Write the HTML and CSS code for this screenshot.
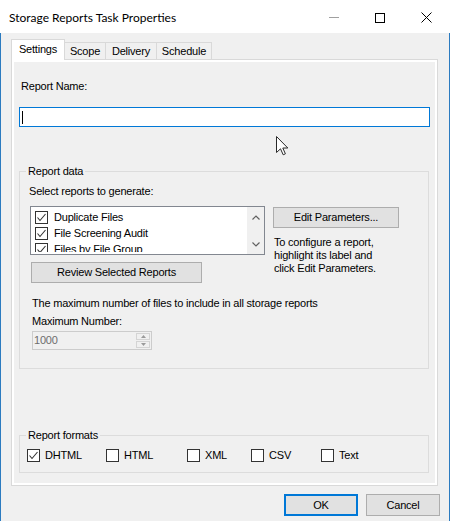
FILE: index.html
```html
<!DOCTYPE html>
<html>
<head>
<meta charset="utf-8">
<title>Storage Reports Task Properties</title>
<link rel="stylesheet" href="styles.css">
</head>
<body>
<div class="window">
  <div class="titlebar">
    <span class="title">Storage Reports Task Properties</span>
    <div class="controls">
      <span class="ctl"><svg width="10" height="1" viewBox="0 0 10 1"><rect width="10" height="1" fill="#a0a0a0"/></svg></span>
      <span class="ctl"><svg width="10" height="10" viewBox="0 0 10 10"><rect x="0.5" y="0.5" width="9" height="9" fill="none" stroke="#000"/></svg></span>
      <span class="ctl"><svg width="11" height="11" viewBox="0 0 11 11"><path d="M0.5 0.5 L10.5 10.5 M10.5 0.5 L0.5 10.5" stroke="#000" stroke-width="1" fill="none"/></svg></span>
    </div>
  </div>
  <div class="client">
    <div class="tabs">
      <div class="tab active t-settings">Settings</div>
      <div class="tab t-scope">Scope</div>
      <div class="tab t-delivery">Delivery</div>
      <div class="tab t-schedule">Schedule</div>
    </div>
    <div class="panel">
      <div class="field-label">Report Name:</div>
      <div class="textbox"><span class="caret"></span></div>

      <fieldset class="group group-data">
        <legend>Report data</legend>
        <div class="data-body">
          <div class="select-label">Select reports to generate:</div>
          <div class="data-row">
            <div class="left-col">
              <div class="listbox">
                <div class="items">
                  <div class="item"><span class="check"><svg width="11" height="11" viewBox="0 0 11 11"><path d="M1.5 5.5 L4 8.5 L9.5 2" fill="none" stroke="#333" stroke-width="1.1"/></svg></span>Duplicate Files</div>
                  <div class="item"><span class="check"><svg width="11" height="11" viewBox="0 0 11 11"><path d="M1.5 5.5 L4 8.5 L9.5 2" fill="none" stroke="#333" stroke-width="1.1"/></svg></span>File Screening Audit</div>
                  <div class="item"><span class="check"><svg width="11" height="11" viewBox="0 0 11 11"><path d="M1.5 5.5 L4 8.5 L9.5 2" fill="none" stroke="#333" stroke-width="1.1"/></svg></span>Files by File Group</div>
                </div>
                <div class="scrollbar">
                  <svg width="8" height="5" viewBox="0 0 8 5"><path d="M0.5 4.5 L4 1 L7.5 4.5" fill="none" stroke="#606060" stroke-width="1.2"/></svg>
                  <svg width="8" height="5" viewBox="0 0 8 5"><path d="M0.5 0.5 L4 4 L7.5 0.5" fill="none" stroke="#606060" stroke-width="1.2"/></svg>
                </div>
              </div>
              <button class="btn review">Review Selected Reports</button>
            </div>
            <div class="right-col">
              <button class="btn edit">Edit Parameters...</button>
              <p class="hint">To configure a report,<br>highlight its label and<br>click Edit Parameters.</p>
            </div>
          </div>
          <div class="max-text">The maximum number of files to include in all storage reports</div>
          <div class="max-label">Maximum Number:</div>
          <div class="spin">
            <span class="spin-val">1000</span>
            <span class="spin-btns">
              <span class="spin-btn"><svg width="5" height="3" viewBox="0 0 5 3"><path d="M0 3 L2.5 0 L5 3 Z" fill="#9a9a9a"/></svg></span>
              <span class="spin-btn"><svg width="5" height="3" viewBox="0 0 5 3"><path d="M0 0 L2.5 3 L5 0 Z" fill="#9a9a9a"/></svg></span>
            </span>
          </div>
        </div>
      </fieldset>

      <fieldset class="group group-formats">
        <legend>Report formats</legend>
        <div class="formats-body">
          <label class="fmt"><span class="check"><svg width="11" height="11" viewBox="0 0 11 11"><path d="M1.5 5.5 L4 8.5 L9.5 2" fill="none" stroke="#333" stroke-width="1.1"/></svg></span>DHTML</label>
          <label class="fmt"><span class="check"></span>HTML</label>
          <label class="fmt"><span class="check"></span>XML</label>
          <label class="fmt"><span class="check"></span>CSV</label>
          <label class="fmt"><span class="check"></span>Text</label>
        </div>
      </fieldset>
    </div>
    <div class="buttons">
      <button class="btn dlg ok">OK</button>
      <button class="btn dlg">Cancel</button>
    </div>
  </div>
  <svg class="cursor" width="13" height="20" viewBox="0 0 13 20"><path d="M0.5 0.5 L0.5 16.5 L4.5 12.8 L7.2 18.8 L9.4 17.8 L6.8 12 L11.8 12 Z" fill="#fff" stroke="#2a2a2a" stroke-width="1" stroke-linejoin="round"/></svg>
</div>
</body>
</html>
```
FILE: styles.css
```css
* { box-sizing: border-box; }
html, body { margin: 0; padding: 0; background: #fff; }
body {
  font-family: "Liberation Sans", Arial, sans-serif;
  font-size: 11px;
  letter-spacing: -0.2px;
  line-height: 13px;
  color: #000;
}
.window { position: relative; width: 451px; height: 521px; overflow: hidden; background: #fff; }

.titlebar { height: 33px; padding-top: 2px; display: flex; align-items: center; background: #fff; }
.title { padding-left: 9px; font-family: Lato, "Noto Sans", sans-serif; font-size: 12px; line-height: 16px; letter-spacing: 0; color: #000; }
.controls { margin-left: auto; margin-right: 2px; display: flex; height: 31px; }
.ctl { width: 46px; display: flex; align-items: center; justify-content: center; }
.ctl svg { display: block; }

.client {
  width: 450px; height: 488px; background: #f0f0f0;
  border-left: 1px solid #2b7bc0; border-right: 1px solid #2b7bc0;
  padding: 6px 9px 0 10px;
}

.tabs { display: flex; align-items: flex-end; height: 20px; position: relative; z-index: 1; }
.tab {
  height: 17px; border: 1px solid #d9d9d9; border-bottom: none; background: #f0f0f0;
  text-align: center; padding-top: 2px; margin-left: -1px; white-space: nowrap;
}
.tab.active { height: 21px; margin-bottom: -1px; margin-left: 0; background: #fff; padding-top: 3px; }
.t-settings { width: 54px; }
.t-scope { width: 42px; }
.t-delivery { width: 52px; }
.t-schedule { width: 56px; }

.panel {
  width: 427px; height: 427px; border: 1px solid #d9d9d9;
  box-shadow: inset 0 0 0 2px #fff; background: #f0f0f0;
  padding: 20px 7px 0 7px;
}
.field-label { margin-left: 2px; }
.textbox {
  margin-top: 14px; width: 411px; height: 20px; background: #fff;
  border: 1px solid #0078d7; display: flex; align-items: center;
}
.caret { width: 1px; height: 13px; background: #000; margin-left: 2px; }

.group { margin: 0; padding: 0; border: 1px solid #dcdcdc; width: 410px; min-width: 0; }
.group legend { margin-left: 6px; padding: 0 2px; line-height: 13px; }
.group-data { margin-top: 38px; }
.data-body { padding: 7px 0 18px 9px; }
.data-row { display: flex; align-items: flex-start; margin-top: 8px; }
.left-col { margin-left: 1px; display: flex; flex-direction: column; align-items: flex-start; }
.listbox { width: 235px; height: 49px; border: 1px solid #828790; background: #fff; display: flex; align-items: flex-start; }
.items { flex: 1; height: 45px; padding: 2px 0 0 4px; overflow: hidden; }
.item { height: 16px; display: flex; align-items: center; white-space: nowrap; }
.check {
  width: 13px; height: 13px; border: 1px solid #333; background: #fff;
  margin-right: 6px; flex: none; display: flex; align-items: center; justify-content: center;
}
.check svg { display: block; }
.scrollbar {
  width: 17px; height: 47px; background: #f0f0f0; display: flex; flex-direction: column;
  justify-content: space-between; align-items: center; padding: 8px 0 7px;
}
.scrollbar svg { display: block; }

.btn {
  font: inherit; letter-spacing: inherit; color: #000; background: #e1e1e1; border: 1px solid #adadad;
  padding: 0; margin: 0; line-height: 13px;
}
.review { width: 171px; height: 21px; margin-top: 7px; margin-left: 1px; }
.right-col { margin-left: 8px; margin-top: 1px; }
.edit { width: 126px; height: 21px; display: block; }
.hint { margin: 8px 0 0 1px; }

.max-text { margin-top: 14px; margin-left: 3px; white-space: nowrap; }
.max-label { margin-top: 5px; margin-left: 3px; }
.spin {
  margin-top: 3px; margin-left: 3px; width: 120px; height: 19px;
  border: 1px solid #cccccc; background: #f0f0f0; display: flex; align-items: stretch;
}
.spin-val { flex: 1; color: #6d6d6d; padding-left: 1px; line-height: 17px; }
.spin-btns { width: 14px; margin: 1px 1px 1px 0; display: flex; flex-direction: column; gap: 1px; }
.spin-btn { flex: 1; border: 1px solid #d4d4d4; background: #f0f0f0; display: flex; align-items: center; justify-content: center; }
.spin-btn svg { display: block; }

.group-formats { margin-top: 60px; }
.formats-body {
  display: grid; grid-template-columns: 79px 81px 64px 70px auto;
  padding: 7px 0 10px 7px;
}
.fmt { display: flex; align-items: center; height: 13px; white-space: nowrap; }
.fmt .check { margin-right: 5px; }

.buttons { display: flex; justify-content: flex-end; gap: 8px; margin-top: 8px; }
.dlg { width: 74px; height: 22px; }
.ok { border-color: #0078d7; box-shadow: inset 0 0 0 1px #0078d7; }

.cursor { position: absolute; left: 276px; top: 136px; display: block; }
```
